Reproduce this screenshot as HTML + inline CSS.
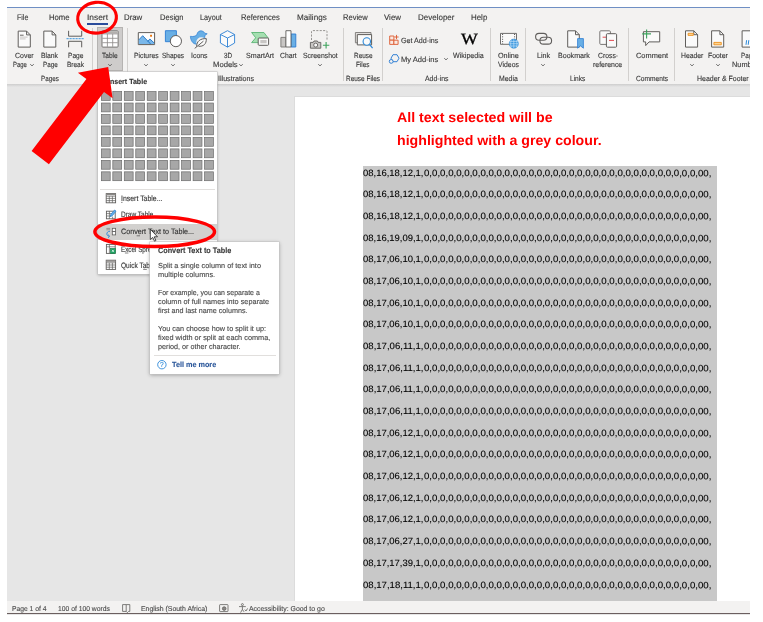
<!DOCTYPE html>
<html lang="en">
<head>
<meta charset="utf-8">
<title>Word - Insert Table - Convert Text to Table</title>
<style>
html,body{margin:0;padding:0;background:#fff;}
body{width:763px;height:622px;position:relative;overflow:hidden;font-family:"Liberation Sans",sans-serif;color:#383838;}
#app{position:absolute;left:7px;top:7px;width:743px;height:607.5px;overflow:hidden;background:#e6e6e6;}
/* everything inside #app is positioned in page coordinates via this shifted layer */
#L{position:absolute;left:-7px;top:-7px;width:763px;height:622px;will-change:transform;}
.t{position:absolute;white-space:nowrap;line-height:1;transform-origin:0 0;display:block;-webkit-text-stroke-width:.12px;}
.a{position:absolute;display:block;overflow:visible;}
#topline{position:absolute;left:7px;top:7px;width:743px;height:1px;background:#6f8fc4;}
#ribbon{position:absolute;left:7px;top:8px;width:743px;height:75.6px;background:#f3f2f1;}
#ribshadow{position:absolute;left:7px;top:83.6px;width:743px;height:3px;background:linear-gradient(#cdcdcd,#e6e6e6);}
.sep{position:absolute;top:28px;width:1px;height:53px;background:#d2d0ce;display:block;}
#tabline{position:absolute;left:86.5px;top:22.5px;width:21.5px;height:2px;background:#2b4c9b;}
#tablebtn{position:absolute;left:97.2px;top:27.3px;width:25.6px;height:44px;background:#cecccb;box-sizing:border-box;border:1px solid #b5b3b1;}
#page{position:absolute;left:294px;top:96px;width:470px;height:506px;background:#fff;border-left:1px solid #dcdcdc;border-top:1px solid #dcdcdc;box-sizing:border-box;}
#sel{position:absolute;left:363.2px;top:165.7px;width:353.4px;height:436px;background:#c8c8c8;}
#status{position:absolute;left:7px;top:601.3px;width:743px;height:12.2px;background:#f3f2f1;border-bottom:1.4px solid #6b5f5f;}
#dd{position:absolute;left:97.8px;top:72px;width:119.3px;height:202px;background:#fff;box-shadow:0 0 0 .6px #c6c6c6,0 1px 3px rgba(0,0,0,.32);}
#ddsep{position:absolute;left:100px;top:189px;width:115px;height:1px;background:#e1dfdd;}
#ddhl{position:absolute;left:97.8px;top:224.1px;width:119.3px;height:16px;background:#d2d0ce;}
#tt{position:absolute;left:150.3px;top:242px;width:129px;height:131.8px;background:#fff;box-shadow:0 0 0 .6px #c6c6c6,0 1px 4px rgba(0,0,0,.35);}
#ttsep{position:absolute;left:153.8px;top:355.2px;width:122.6px;height:1px;background:#e1dfdd;}
</style>
</head>
<body>
<div id="app"><div id="L">
<header id="ribbon-area">
<div id="topline"></div>
<div id="ribbon"></div>
<div id="ribshadow"></div>
<div id="tabline"></div>
<nav id="tabs">
<span class="t" style="left:17.30px;top:13px;line-height:9px;font-size:8.1px;transform:scaleX(0.8658) rotate(.03deg)">File</span><span class="t" style="left:48.60px;top:13px;line-height:9px;font-size:8.1px;transform:scaleX(0.9534) rotate(.03deg)">Home</span><span class="t" style="left:86.70px;top:13px;line-height:9px;font-size:8.1px;transform:scaleX(1.0366) rotate(.03deg)">Insert</span><span class="t" style="left:124.00px;top:13px;line-height:9px;font-size:8.1px;transform:scaleX(0.9682) rotate(.03deg)">Draw</span><span class="t" style="left:159.50px;top:13px;line-height:9px;font-size:8.1px;transform:scaleX(0.9320) rotate(.03deg)">Design</span><span class="t" style="left:200.40px;top:13px;line-height:9px;font-size:8.1px;transform:scaleX(0.9005) rotate(.03deg)">Layout</span><span class="t" style="left:240.60px;top:13px;line-height:9px;font-size:8.1px;transform:scaleX(0.9391) rotate(.03deg)">References</span><span class="t" style="left:296.50px;top:13px;line-height:9px;font-size:8.1px;transform:scaleX(0.9996) rotate(.03deg)">Mailings</span><span class="t" style="left:343.20px;top:13px;line-height:9px;font-size:8.1px;transform:scaleX(0.9338) rotate(.03deg)">Review</span><span class="t" style="left:384.30px;top:13px;line-height:9px;font-size:8.1px;transform:scaleX(0.9764) rotate(.03deg)">View</span><span class="t" style="left:417.50px;top:13px;line-height:9px;font-size:8.1px;transform:scaleX(0.9886) rotate(.03deg)">Developer</span><span class="t" style="left:470.60px;top:13px;line-height:9px;font-size:8.1px;transform:scaleX(0.9785) rotate(.03deg)">Help</span>
</nav>
<div id="tablebtn"></div>
<section id="ribbonbody">
<span class="t" style="left:14.80px;top:51px;line-height:9px;font-size:7.5px;transform:scaleX(0.9297) rotate(.03deg)">Cover</span><span class="t" style="left:13.10px;top:60px;line-height:9px;font-size:7.5px;transform:scaleX(0.7879) rotate(.03deg)">Page</span><span class="t" style="left:41.00px;top:51px;line-height:9px;font-size:7.5px;transform:scaleX(0.9061) rotate(.03deg)">Blank</span><span class="t" style="left:42.60px;top:60px;line-height:9px;font-size:7.5px;transform:scaleX(0.8392) rotate(.03deg)">Page</span><span class="t" style="left:67.50px;top:51px;line-height:9px;font-size:7.5px;transform:scaleX(0.8849) rotate(.03deg)">Page</span><span class="t" style="left:66.50px;top:60px;line-height:9px;font-size:7.5px;transform:scaleX(0.8677) rotate(.03deg)">Break</span><span class="t" style="left:41.00px;top:74px;line-height:9px;font-size:7.5px;transform:scaleX(0.8370) rotate(.03deg)">Pages</span><span class="t" style="left:102.20px;top:51px;line-height:9px;font-size:7.5px;transform:scaleX(0.8756) rotate(.03deg)">Table</span><span class="t" style="left:133.90px;top:51px;line-height:9px;font-size:7.5px;transform:scaleX(0.9080) rotate(.03deg)">Pictures</span><span class="t" style="left:162.10px;top:51px;line-height:9px;font-size:7.5px;transform:scaleX(0.8649) rotate(.03deg)">Shapes</span><span class="t" style="left:190.70px;top:51px;line-height:9px;font-size:7.5px;transform:scaleX(0.9260) rotate(.03deg)">Icons</span><span class="t" style="left:223.90px;top:51px;line-height:9px;font-size:7.5px;transform:scaleX(0.8449) rotate(.03deg)">3D</span><span class="t" style="left:213.00px;top:60px;line-height:9px;font-size:7.5px;transform:scaleX(1.0216) rotate(.03deg)">Models</span><span class="t" style="left:245.90px;top:51px;line-height:9px;font-size:7.5px;transform:scaleX(0.9498) rotate(.03deg)">SmartArt</span><span class="t" style="left:280.20px;top:51px;line-height:9px;font-size:7.5px;transform:scaleX(0.9106) rotate(.03deg)">Chart</span><span class="t" style="left:302.80px;top:51px;line-height:9px;font-size:7.5px;transform:scaleX(0.9146) rotate(.03deg)">Screenshot</span><span class="t" style="left:218.00px;top:74px;line-height:9px;font-size:7.5px;transform:scaleX(0.9491) rotate(.03deg)">Illustrations</span><span class="t" style="left:353.80px;top:51px;line-height:9px;font-size:7.5px;transform:scaleX(0.8579) rotate(.03deg)">Reuse</span><span class="t" style="left:356.40px;top:60px;line-height:9px;font-size:7.5px;transform:scaleX(0.8525) rotate(.03deg)">Files</span><span class="t" style="left:345.90px;top:74px;line-height:9px;font-size:7.5px;transform:scaleX(0.8611) rotate(.03deg)">Reuse Files</span><span class="t" style="left:401.00px;top:36px;line-height:9px;font-size:7.5px;transform:scaleX(0.9518) rotate(.03deg)">Get Add-ins</span><span class="t" style="left:401.00px;top:55px;line-height:9px;font-size:7.5px;transform:scaleX(1.0055) rotate(.03deg)">My Add-ins</span><span class="t" style="left:453.30px;top:51px;line-height:9px;font-size:7.5px;transform:scaleX(0.9473) rotate(.03deg)">Wikipedia</span><span class="t" style="left:425.20px;top:74px;line-height:9px;font-size:7.5px;transform:scaleX(0.9241) rotate(.03deg)">Add-ins</span><span class="t" style="left:498.20px;top:51px;line-height:9px;font-size:7.5px;transform:scaleX(0.9640) rotate(.03deg)">Online</span><span class="t" style="left:498.20px;top:60px;line-height:9px;font-size:7.5px;transform:scaleX(0.9168) rotate(.03deg)">Videos</span><span class="t" style="left:499.20px;top:74px;line-height:9px;font-size:7.5px;transform:scaleX(0.9203) rotate(.03deg)">Media</span><span class="t" style="left:537.00px;top:51px;line-height:9px;font-size:7.5px;transform:scaleX(0.9449) rotate(.03deg)">Link</span><span class="t" style="left:558.00px;top:51px;line-height:9px;font-size:7.5px;transform:scaleX(0.9449) rotate(.03deg)">Bookmark</span><span class="t" style="left:598.10px;top:51px;line-height:9px;font-size:7.5px;transform:scaleX(0.9102) rotate(.03deg)">Cross-</span><span class="t" style="left:593.30px;top:60px;line-height:9px;font-size:7.5px;transform:scaleX(0.9216) rotate(.03deg)">reference</span><span class="t" style="left:569.80px;top:74px;line-height:9px;font-size:7.5px;transform:scaleX(0.8739) rotate(.03deg)">Links</span><span class="t" style="left:635.60px;top:51px;line-height:9px;font-size:7.5px;transform:scaleX(0.9874) rotate(.03deg)">Comment</span><span class="t" style="left:635.60px;top:74px;line-height:9px;font-size:7.5px;transform:scaleX(0.8853) rotate(.03deg)">Comments</span><span class="t" style="left:681.00px;top:51px;line-height:9px;font-size:7.5px;transform:scaleX(0.9106) rotate(.03deg)">Header</span><span class="t" style="left:708.00px;top:51px;line-height:9px;font-size:7.5px;transform:scaleX(0.9181) rotate(.03deg)">Footer</span><span class="t" style="left:740.70px;top:51px;line-height:9px;font-size:7.5px;transform:scaleX(0.8449) rotate(.03deg)">Page</span><span class="t" style="left:731.80px;top:60px;line-height:9px;font-size:7.5px;transform:scaleX(0.9822) rotate(.03deg)">Number</span><span class="t" style="left:696.80px;top:74px;line-height:9px;font-size:7.5px;transform:scaleX(0.9325) rotate(.03deg)">Header &amp; Footer</span><span class="t" style="-webkit-text-stroke:.35px #000;left:460.60px;top:30px;line-height:17px;font-size:15.8px;font-family:'Liberation Serif',serif;color:#000;transform:scaleX(1.1266) rotate(.03deg)">W</span><svg class="a" style="left:29.10px;top:62.80px" width="6" height="4" viewBox="0 0 6 4"><path d="M1.3 1.2 L3 2.9 L4.7 1.2" fill="none" stroke="#555" stroke-width="0.9"/></svg><svg class="a" style="left:106.70px;top:62.60px" width="6" height="4" viewBox="0 0 6 4"><path d="M1.3 1.2 L3 2.9 L4.7 1.2" fill="none" stroke="#555" stroke-width="0.9"/></svg><svg class="a" style="left:143.00px;top:62.60px" width="6" height="4" viewBox="0 0 6 4"><path d="M1.3 1.2 L3 2.9 L4.7 1.2" fill="none" stroke="#555" stroke-width="0.9"/></svg><svg class="a" style="left:169.80px;top:62.60px" width="6" height="4" viewBox="0 0 6 4"><path d="M1.3 1.2 L3 2.9 L4.7 1.2" fill="none" stroke="#555" stroke-width="0.9"/></svg><svg class="a" style="left:238.30px;top:62.80px" width="6" height="4" viewBox="0 0 6 4"><path d="M1.3 1.2 L3 2.9 L4.7 1.2" fill="none" stroke="#555" stroke-width="0.9"/></svg><svg class="a" style="left:316.50px;top:62.60px" width="6" height="4" viewBox="0 0 6 4"><path d="M1.3 1.2 L3 2.9 L4.7 1.2" fill="none" stroke="#555" stroke-width="0.9"/></svg><svg class="a" style="left:443.40px;top:57.20px" width="6" height="4" viewBox="0 0 6 4"><path d="M1.3 1.2 L3 2.9 L4.7 1.2" fill="none" stroke="#555" stroke-width="0.9"/></svg><svg class="a" style="left:540.30px;top:62.60px" width="6" height="4" viewBox="0 0 6 4"><path d="M1.3 1.2 L3 2.9 L4.7 1.2" fill="none" stroke="#555" stroke-width="0.9"/></svg><svg class="a" style="left:688.60px;top:62.60px" width="6" height="4" viewBox="0 0 6 4"><path d="M1.3 1.2 L3 2.9 L4.7 1.2" fill="none" stroke="#555" stroke-width="0.9"/></svg><svg class="a" style="left:714.70px;top:62.60px" width="6" height="4" viewBox="0 0 6 4"><path d="M1.3 1.2 L3 2.9 L4.7 1.2" fill="none" stroke="#555" stroke-width="0.9"/></svg><i class="sep" style="left:92.0px"></i><i class="sep" style="left:127.1px"></i><i class="sep" style="left:342.8px"></i><i class="sep" style="left:381.8px"></i><i class="sep" style="left:490.2px"></i><i class="sep" style="left:525.1px"></i><i class="sep" style="left:628.4px"></i><i class="sep" style="left:673.9px"></i>
<svg class="a" style="left:0;top:0" width="763" height="622" viewBox="0 0 763 622" fill="none" stroke-linejoin="round">
<g stroke="#605e5c" stroke-width="1" fill="#fafafa">
<!-- Cover Page -->
<path d="M18.2 31.1H26.6L30.3 34.9V47.1H18.2Z"/><path d="M26.6 31.1V34.9H30.3" fill="none"/>
<!-- Blank Page -->
<path d="M43.8 31.1H52.1L55.8 34.9V47.1H43.8Z"/><path d="M52.1 31.1V34.9H55.8" fill="none"/>
</g>
<g stroke="none">
<rect x="20" y="34.6" width="3.6" height="1.3" fill="#8a8886"/><rect x="20" y="36.6" width="7.6" height="1" fill="#c8c6c4"/><rect x="20" y="38.4" width="5.6" height="1" fill="#c8c6c4"/>
</g>
<!-- Page Break -->
<g stroke="#605e5c" stroke-width="1" fill="none">
<path d="M68.6 30.8V36.2H81.7V30.8"/><path d="M68.6 47.3V41.3H81.7V47.3"/>
</g>
<path d="M66.5 38.7H83.8" stroke="#3a96dd" stroke-width="1" stroke-dasharray="2.2 0.8"/>
<!-- Table icon -->
<g>
<rect x="102" y="30.8" width="16.1" height="16.3" rx="0.9" fill="#fff" stroke="#6b6967" stroke-width="0.9"/>
<path d="M102.5 33.6V32.2Q102.5 31.3 103.4 31.3H116.7Q117.6 31.3 117.6 32.2V33.6Z" fill="#b3b0ad" stroke="none"/>
<path d="M102.4 33.9H117.7M102.4 38.3H117.7M102.4 42.7H117.7M107.4 33.9V46.8M112.7 33.9V46.8" stroke="#8a8886" stroke-width="0.8"/>
</g>
<!-- Pictures -->
<g>
<rect x="138.3" y="32.6" width="16.3" height="12" fill="#fdfdfd" stroke="#605e5c"/>
<path d="M138.8 39.9L142.7 35.7L148.1 41.3L149.9 39L154.1 42.9V44.1H138.8Z" fill="#7ab8ea" stroke="none"/>
<path d="M138.8 39.9L142.7 35.7L150.6 44M147.6 41.4L149.9 39L154.1 42.9" fill="none" stroke="#1e73c4" stroke-width="0.9"/>
<rect x="150.1" y="34.8" width="1.9" height="1.9" fill="#e8740c" stroke="none"/>
</g>
<!-- Shapes -->
<g>
<rect x="165.4" y="30.7" width="11" height="11" fill="#69afe5" stroke="#2b7cd3" stroke-width="0.9"/>
<circle cx="175.9" cy="41.1" r="5.6" fill="#fff" stroke="#605e5c"/>
</g>
<!-- Icons (bird + leaf) -->
<g>
<path d="M190.4 36.3C193 36.9 195.6 36.3 197 34.6C197.2 32.1 199.3 30.4 201.8 30.9C203.2 31.2 204.2 32 204.7 33.2L207.2 33.8L204.9 35.4C204.9 40.6 201.5 44.4 196.3 44.2C193 44 190.6 40.7 190.4 36.3Z" fill="#69afe5" stroke="#2b7cd3" stroke-width="0.7"/>
<circle cx="201.3" cy="42.3" r="5" fill="#f3f2f1" stroke="none"/>
<path d="M196.6 46.6C196.6 41.2 200.4 38.4 206.3 38.6C206.6 44 203.4 46.8 198.4 46.2" fill="#fafafa" stroke="#605e5c" stroke-width="1"/>
<path d="M194.7 48.4L203.4 41.2" stroke="#605e5c" stroke-width="1"/>
</g>
<!-- 3D Models cube -->
<g stroke="#3585d6" stroke-width="0.95" fill="#fafafa">
<path d="M227.5 30.7L234.6 34.5V43L227.5 47.1L220.4 43V34.5Z"/>
<path d="M220.4 34.5L227.5 38L234.6 34.5M227.5 38V47.1" fill="none"/>
</g>
<!-- SmartArt -->
<g>
<path d="M251.6 32.5H263.9L268 37.8L263.9 42.6H251.6L255.7 37.8Z" fill="#a5dfb1" stroke="#4caf6a" stroke-width="0.8"/>
<rect x="258.2" y="38" width="10.4" height="7.3" rx="0.9" fill="#fafafa" stroke="#605e5c"/>
<rect x="260.3" y="40" width="6.3" height="3.3" fill="#c8c6c4" stroke="none"/>
</g>
<!-- Chart -->
<g stroke-width="0.9">
<rect x="280.9" y="37.4" width="5" height="9.6" fill="#c8c6c4" stroke="#797775"/>
<rect x="291" y="34" width="4.8" height="13" fill="#69afe5" stroke="#2b7cd3"/>
<rect x="285.9" y="30.7" width="5.1" height="16.3" fill="#fff" stroke="#605e5c"/>
</g>
<!-- Screenshot -->
<g>
<path d="M311.5 40V31.6Q311.5 30.6 312.5 30.6H326Q327 30.6 327 31.6V40.6" stroke="#8a8886" stroke-width="0.9" stroke-dasharray="2.1 1.3"/>
<path d="M310.4 42.4H313.2L314 41H317.4L318.2 42.4H320.8V48.2H310.4Z" fill="#c8c6c4" stroke="#605e5c" stroke-width="0.9"/>
<circle cx="315.7" cy="45.1" r="2" fill="#fafafa" stroke="#605e5c" stroke-width="0.9"/>
<path d="M326.1 42V48.4M322.9 45.2H329.3" stroke="#3ca35c" stroke-width="1.1"/>
</g>
<!-- Reuse Files -->
<g>
<rect x="355.4" y="32.5" width="15.6" height="10.3" fill="#e1dfdd" stroke="#797775" stroke-width="0.9"/>
<rect x="357.3" y="34.6" width="14.3" height="10.3" fill="#fafafa" stroke="#605e5c"/>
<circle cx="366.8" cy="41.5" r="3.7" fill="#fafafa" stroke="#2b88d8" stroke-width="1.1"/>
<path d="M369.5 44.4L372.6 48.2" stroke="#2b88d8" stroke-width="1.2"/>
</g>
<!-- Get Add-ins -->
<g stroke="#dc5a30" stroke-width="0.9" fill="#fbe9e2">
<rect x="389.7" y="36" width="4.2" height="4.2"/><rect x="389.7" y="40.2" width="4.2" height="4.2"/><rect x="393.9" y="40.2" width="4.2" height="4.2"/>
<path d="M396.5 34.9V39.1M394.4 37H398.6" fill="none"/>
</g>
<!-- My Add-ins -->
<g stroke="#2b7cd3" stroke-width="0.95" fill="#f3f2f1">
<path d="M399 58.2L397 61.7H393L391 58.2L393 54.7H397Z" stroke-linejoin="round"/>
<circle cx="391.2" cy="61.4" r="1.9"/>
</g>
<!-- Online Videos -->
<g>
<rect x="500.5" y="33.4" width="16" height="10.9" fill="#fafafa" stroke="#605e5c" stroke-width="0.9"/>
<path d="M502.6 34V44M514.6 34V40" stroke="#3b3a39" stroke-width="1" stroke-dasharray="0.9 1.5"/>
<circle cx="513.8" cy="43.7" r="4.6" fill="#3f9ae0" stroke="#2b88d8" stroke-width="0.5"/>
<path d="M509.4 43.7H518.2M513.8 39.3V48.1M511.3 40.2C510.4 42.5 510.4 45 511.3 47.3M516.3 40.2C517.2 42.5 517.2 45 516.3 47.3M510 41.4H517.6M510 46H517.6" stroke="#cfe6f8" stroke-width="0.6" fill="none"/>
</g>
<!-- Link -->
<g stroke="#605e5c" stroke-width="1.1">
<rect x="535.6" y="33.4" width="11.3" height="6.8" rx="3.4"/>
<rect x="539.9" y="37.2" width="11.7" height="6.9" rx="3.45"/>
</g>
<!-- Bookmark -->
<g>
<path d="M567.7 30.8H575.5L579.3 34.7V47.1H567.7Z" fill="#fafafa" stroke="#605e5c"/><path d="M575.5 30.8V34.7H579.3" stroke="#605e5c"/>
<path d="M577.6 38.6H583.4V48.2L580.5 45.9L577.6 48.2Z" fill="#69afe5" stroke="#2b7cd3" stroke-width="0.8"/>
</g>
<!-- Cross-reference -->
<g>
<rect x="599.8" y="30.8" width="10.6" height="13.6" rx="1" fill="#fafafa" stroke="#797775"/>
<path d="M602.6 37.2H606" stroke="#e0383e" stroke-width="0.9"/>
<rect x="606.4" y="33.7" width="10.2" height="13.5" rx="1" fill="#fafafa" stroke="#605e5c"/>
<path d="M609 40.4H614" stroke="#e0383e" stroke-width="0.9"/>
</g>
<!-- Comment -->
<g>
<path d="M643.4 31.7H659.7V41.9H649L645.7 45.6V41.9H643.4Z" fill="#fafafa" stroke="#605e5c"/>
<path d="M646.6 29.4V38.4M642.2 33.9H651" stroke="#3ca35c" stroke-width="1.1"/>
</g>
<!-- Header -->
<g>
<path d="M685.5 30.8H693.8L697.6 34.7V47.1H685.5Z" fill="#fafafa" stroke="#605e5c"/><path d="M693.8 30.8V34.7H697.6" stroke="#605e5c"/>
<rect x="688.1" y="33.3" width="5.2" height="2.1" fill="#ffd590" stroke="#e8860c" stroke-width="0.8"/>
</g>
<!-- Footer -->
<g>
<path d="M711.6 30.8H719.9L723.7 34.7V47.1H711.6Z" fill="#fafafa" stroke="#605e5c"/><path d="M719.9 30.8V34.7H723.7" stroke="#605e5c"/>
<rect x="713.9" y="42.4" width="7.4" height="2.4" fill="#ffd590" stroke="#e8860c" stroke-width="0.8"/>
</g>
<!-- Page Number -->
<g>
<path d="M742.1 30.8H750.4L754.2 34.7V47.1H742.1Z" fill="#fafafa" stroke="#605e5c"/>
<path d="M746.6 40.2L746 44.8M748.8 40.2L748.2 44.8" stroke="#2b88d8" stroke-width="1"/>
</g>
</svg>

</section>
</header>
<main id="document">
<div id="page"></div>
<div id="sel"></div>
<article id="doc">
<span class="t" style="left:363.10px;top:168px;line-height:10px;font-size:9.1px;-webkit-text-stroke:.1px #000;color:#000;transform:scaleX(1.0397) rotate(.03deg)">08,16,18,12,1,</span><span class="t" style="left:423.60px;top:168px;line-height:10px;font-size:9.1px;-webkit-text-stroke:.1px #000;color:#000;transform:scaleX(1.0625) rotate(.03deg)">0,0,0,0,0,0,0,0,0,0,0,0,0,0,0,0,0,0,0,0,0,0,0,0,0,0,0,0,0,0,0,0,0,0,00,</span><span class="t" style="left:363.10px;top:189px;line-height:10px;font-size:9.1px;-webkit-text-stroke:.1px #000;color:#000;transform:scaleX(1.0397) rotate(.03deg)">08,16,18,12,1,</span><span class="t" style="left:423.60px;top:189px;line-height:10px;font-size:9.1px;-webkit-text-stroke:.1px #000;color:#000;transform:scaleX(1.0625) rotate(.03deg)">0,0,0,0,0,0,0,0,0,0,0,0,0,0,0,0,0,0,0,0,0,0,0,0,0,0,0,0,0,0,0,0,0,0,00,</span><span class="t" style="left:363.10px;top:211px;line-height:10px;font-size:9.1px;-webkit-text-stroke:.1px #000;color:#000;transform:scaleX(1.0397) rotate(.03deg)">08,16,18,12,1,</span><span class="t" style="left:423.60px;top:211px;line-height:10px;font-size:9.1px;-webkit-text-stroke:.1px #000;color:#000;transform:scaleX(1.0625) rotate(.03deg)">0,0,0,0,0,0,0,0,0,0,0,0,0,0,0,0,0,0,0,0,0,0,0,0,0,0,0,0,0,0,0,0,0,0,00,</span><span class="t" style="left:363.10px;top:233px;line-height:10px;font-size:9.1px;-webkit-text-stroke:.1px #000;color:#000;transform:scaleX(1.0397) rotate(.03deg)">08,16,19,09,1,</span><span class="t" style="left:423.60px;top:233px;line-height:10px;font-size:9.1px;-webkit-text-stroke:.1px #000;color:#000;transform:scaleX(1.0625) rotate(.03deg)">0,0,0,0,0,0,0,0,0,0,0,0,0,0,0,0,0,0,0,0,0,0,0,0,0,0,0,0,0,0,0,0,0,0,00,</span><span class="t" style="left:363.10px;top:254px;line-height:10px;font-size:9.1px;-webkit-text-stroke:.1px #000;color:#000;transform:scaleX(1.0397) rotate(.03deg)">08,17,06,10,1,</span><span class="t" style="left:423.60px;top:254px;line-height:10px;font-size:9.1px;-webkit-text-stroke:.1px #000;color:#000;transform:scaleX(1.0625) rotate(.03deg)">0,0,0,0,0,0,0,0,0,0,0,0,0,0,0,0,0,0,0,0,0,0,0,0,0,0,0,0,0,0,0,0,0,0,00,</span><span class="t" style="left:363.10px;top:276px;line-height:10px;font-size:9.1px;-webkit-text-stroke:.1px #000;color:#000;transform:scaleX(1.0397) rotate(.03deg)">08,17,06,10,1,</span><span class="t" style="left:423.60px;top:276px;line-height:10px;font-size:9.1px;-webkit-text-stroke:.1px #000;color:#000;transform:scaleX(1.0625) rotate(.03deg)">0,0,0,0,0,0,0,0,0,0,0,0,0,0,0,0,0,0,0,0,0,0,0,0,0,0,0,0,0,0,0,0,0,0,00,</span><span class="t" style="left:363.10px;top:298px;line-height:10px;font-size:9.1px;-webkit-text-stroke:.1px #000;color:#000;transform:scaleX(1.0397) rotate(.03deg)">08,17,06,10,1,</span><span class="t" style="left:423.60px;top:298px;line-height:10px;font-size:9.1px;-webkit-text-stroke:.1px #000;color:#000;transform:scaleX(1.0625) rotate(.03deg)">0,0,0,0,0,0,0,0,0,0,0,0,0,0,0,0,0,0,0,0,0,0,0,0,0,0,0,0,0,0,0,0,0,0,00,</span><span class="t" style="left:363.10px;top:319px;line-height:10px;font-size:9.1px;-webkit-text-stroke:.1px #000;color:#000;transform:scaleX(1.0397) rotate(.03deg)">08,17,06,10,1,</span><span class="t" style="left:423.60px;top:319px;line-height:10px;font-size:9.1px;-webkit-text-stroke:.1px #000;color:#000;transform:scaleX(1.0625) rotate(.03deg)">0,0,0,0,0,0,0,0,0,0,0,0,0,0,0,0,0,0,0,0,0,0,0,0,0,0,0,0,0,0,0,0,0,0,00,</span><span class="t" style="left:363.10px;top:341px;line-height:10px;font-size:9.1px;-webkit-text-stroke:.1px #000;color:#000;transform:scaleX(1.0519) rotate(.03deg)">08,17,06,11,1,</span><span class="t" style="left:423.60px;top:341px;line-height:10px;font-size:9.1px;-webkit-text-stroke:.1px #000;color:#000;transform:scaleX(1.0625) rotate(.03deg)">0,0,0,0,0,0,0,0,0,0,0,0,0,0,0,0,0,0,0,0,0,0,0,0,0,0,0,0,0,0,0,0,0,0,00,</span><span class="t" style="left:363.10px;top:363px;line-height:10px;font-size:9.1px;-webkit-text-stroke:.1px #000;color:#000;transform:scaleX(1.0519) rotate(.03deg)">08,17,06,11,1,</span><span class="t" style="left:423.60px;top:363px;line-height:10px;font-size:9.1px;-webkit-text-stroke:.1px #000;color:#000;transform:scaleX(1.0625) rotate(.03deg)">0,0,0,0,0,0,0,0,0,0,0,0,0,0,0,0,0,0,0,0,0,0,0,0,0,0,0,0,0,0,0,0,0,0,00,</span><span class="t" style="left:363.10px;top:384px;line-height:10px;font-size:9.1px;-webkit-text-stroke:.1px #000;color:#000;transform:scaleX(1.0519) rotate(.03deg)">08,17,06,11,1,</span><span class="t" style="left:423.60px;top:384px;line-height:10px;font-size:9.1px;-webkit-text-stroke:.1px #000;color:#000;transform:scaleX(1.0625) rotate(.03deg)">0,0,0,0,0,0,0,0,0,0,0,0,0,0,0,0,0,0,0,0,0,0,0,0,0,0,0,0,0,0,0,0,0,0,00,</span><span class="t" style="left:363.10px;top:406px;line-height:10px;font-size:9.1px;-webkit-text-stroke:.1px #000;color:#000;transform:scaleX(1.0519) rotate(.03deg)">08,17,06,11,1,</span><span class="t" style="left:423.60px;top:406px;line-height:10px;font-size:9.1px;-webkit-text-stroke:.1px #000;color:#000;transform:scaleX(1.0625) rotate(.03deg)">0,0,0,0,0,0,0,0,0,0,0,0,0,0,0,0,0,0,0,0,0,0,0,0,0,0,0,0,0,0,0,0,0,0,00,</span><span class="t" style="left:363.10px;top:428px;line-height:10px;font-size:9.1px;-webkit-text-stroke:.1px #000;color:#000;transform:scaleX(1.0397) rotate(.03deg)">08,17,06,12,1,</span><span class="t" style="left:423.60px;top:428px;line-height:10px;font-size:9.1px;-webkit-text-stroke:.1px #000;color:#000;transform:scaleX(1.0625) rotate(.03deg)">0,0,0,0,0,0,0,0,0,0,0,0,0,0,0,0,0,0,0,0,0,0,0,0,0,0,0,0,0,0,0,0,0,0,00,</span><span class="t" style="left:363.10px;top:449px;line-height:10px;font-size:9.1px;-webkit-text-stroke:.1px #000;color:#000;transform:scaleX(1.0397) rotate(.03deg)">08,17,06,12,1,</span><span class="t" style="left:423.60px;top:449px;line-height:10px;font-size:9.1px;-webkit-text-stroke:.1px #000;color:#000;transform:scaleX(1.0625) rotate(.03deg)">0,0,0,0,0,0,0,0,0,0,0,0,0,0,0,0,0,0,0,0,0,0,0,0,0,0,0,0,0,0,0,0,0,0,00,</span><span class="t" style="left:363.10px;top:471px;line-height:10px;font-size:9.1px;-webkit-text-stroke:.1px #000;color:#000;transform:scaleX(1.0397) rotate(.03deg)">08,17,06,12,1,</span><span class="t" style="left:423.60px;top:471px;line-height:10px;font-size:9.1px;-webkit-text-stroke:.1px #000;color:#000;transform:scaleX(1.0625) rotate(.03deg)">0,0,0,0,0,0,0,0,0,0,0,0,0,0,0,0,0,0,0,0,0,0,0,0,0,0,0,0,0,0,0,0,0,0,00,</span><span class="t" style="left:363.10px;top:493px;line-height:10px;font-size:9.1px;-webkit-text-stroke:.1px #000;color:#000;transform:scaleX(1.0397) rotate(.03deg)">08,17,06,12,1,</span><span class="t" style="left:423.60px;top:493px;line-height:10px;font-size:9.1px;-webkit-text-stroke:.1px #000;color:#000;transform:scaleX(1.0625) rotate(.03deg)">0,0,0,0,0,0,0,0,0,0,0,0,0,0,0,0,0,0,0,0,0,0,0,0,0,0,0,0,0,0,0,0,0,0,00,</span><span class="t" style="left:363.10px;top:514px;line-height:10px;font-size:9.1px;-webkit-text-stroke:.1px #000;color:#000;transform:scaleX(1.0397) rotate(.03deg)">08,17,06,12,1,</span><span class="t" style="left:423.60px;top:514px;line-height:10px;font-size:9.1px;-webkit-text-stroke:.1px #000;color:#000;transform:scaleX(1.0625) rotate(.03deg)">0,0,0,0,0,0,0,0,0,0,0,0,0,0,0,0,0,0,0,0,0,0,0,0,0,0,0,0,0,0,0,0,0,0,00,</span><span class="t" style="left:363.10px;top:536px;line-height:10px;font-size:9.1px;-webkit-text-stroke:.1px #000;color:#000;transform:scaleX(1.0397) rotate(.03deg)">08,17,06,27,1,</span><span class="t" style="left:423.60px;top:536px;line-height:10px;font-size:9.1px;-webkit-text-stroke:.1px #000;color:#000;transform:scaleX(1.0625) rotate(.03deg)">0,0,0,0,0,0,0,0,0,0,0,0,0,0,0,0,0,0,0,0,0,0,0,0,0,0,0,0,0,0,0,0,0,0,00,</span><span class="t" style="left:363.10px;top:558px;line-height:10px;font-size:9.1px;-webkit-text-stroke:.1px #000;color:#000;transform:scaleX(1.0397) rotate(.03deg)">08,17,17,39,1,</span><span class="t" style="left:423.60px;top:558px;line-height:10px;font-size:9.1px;-webkit-text-stroke:.1px #000;color:#000;transform:scaleX(1.0625) rotate(.03deg)">0,0,0,0,0,0,0,0,0,0,0,0,0,0,0,0,0,0,0,0,0,0,0,0,0,0,0,0,0,0,0,0,0,0,00,</span><span class="t" style="left:363.10px;top:580px;line-height:10px;font-size:9.1px;-webkit-text-stroke:.1px #000;color:#000;transform:scaleX(1.0519) rotate(.03deg)">08,17,18,11,1,</span><span class="t" style="left:423.60px;top:580px;line-height:10px;font-size:9.1px;-webkit-text-stroke:.1px #000;color:#000;transform:scaleX(1.0625) rotate(.03deg)">0,0,0,0,0,0,0,0,0,0,0,0,0,0,0,0,0,0,0,0,0,0,0,0,0,0,0,0,0,0,0,0,0,0,00,</span><span class="t" style="-webkit-text-stroke-width:0;left:397.20px;top:109px;line-height:16px;font-size:13.9px;font-weight:700;color:#ff0000;transform:scaleX(1.0231) rotate(.03deg)">All text selected will be</span><span class="t" style="-webkit-text-stroke-width:0;left:397.20px;top:132px;line-height:16px;font-size:13.9px;font-weight:700;color:#ff0000;transform:scaleX(1.0195) rotate(.03deg)">highlighted with a grey colour.</span>
</article>
</main>
<footer id="statusbar">
<div id="status"></div>
<span class="t" style="left:11.80px;top:605px;line-height:8px;font-size:7.1px;color:#4a4a4a;transform:scaleX(0.9499) rotate(.03deg)">Page 1 of 4</span><span class="t" style="left:58.40px;top:605px;line-height:8px;font-size:7.1px;color:#4a4a4a;transform:scaleX(0.9528) rotate(.03deg)">100 of 100 words</span><span class="t" style="left:140.80px;top:605px;line-height:8px;font-size:7.1px;color:#4a4a4a;transform:scaleX(0.9726) rotate(.03deg)">English (South Africa)</span><span class="t" style="left:248.90px;top:605px;line-height:8px;font-size:7.1px;color:#4a4a4a;transform:scaleX(0.9750) rotate(.03deg)">Accessibility: Good to go</span>
</footer>
<div id="menu" role="menu">
<div id="dd"></div>
<div id="ddsep"></div>
<div id="ddhl"></div>
<svg class="a" style="left:0;top:0" width="763" height="622" viewBox="0 0 763 622"><g fill="#a7a7a7" stroke="#6c6c6c" stroke-width="0.7"><rect x="101.35" y="91.55" width="8.85" height="8.85"/><rect x="112.82" y="91.55" width="8.85" height="8.85"/><rect x="124.29" y="91.55" width="8.85" height="8.85"/><rect x="135.76" y="91.55" width="8.85" height="8.85"/><rect x="147.23" y="91.55" width="8.85" height="8.85"/><rect x="158.70" y="91.55" width="8.85" height="8.85"/><rect x="170.17" y="91.55" width="8.85" height="8.85"/><rect x="181.64" y="91.55" width="8.85" height="8.85"/><rect x="193.11" y="91.55" width="8.85" height="8.85"/><rect x="204.58" y="91.55" width="8.85" height="8.85"/><rect x="101.35" y="103.02" width="8.85" height="8.85"/><rect x="112.82" y="103.02" width="8.85" height="8.85"/><rect x="124.29" y="103.02" width="8.85" height="8.85"/><rect x="135.76" y="103.02" width="8.85" height="8.85"/><rect x="147.23" y="103.02" width="8.85" height="8.85"/><rect x="158.70" y="103.02" width="8.85" height="8.85"/><rect x="170.17" y="103.02" width="8.85" height="8.85"/><rect x="181.64" y="103.02" width="8.85" height="8.85"/><rect x="193.11" y="103.02" width="8.85" height="8.85"/><rect x="204.58" y="103.02" width="8.85" height="8.85"/><rect x="101.35" y="114.49" width="8.85" height="8.85"/><rect x="112.82" y="114.49" width="8.85" height="8.85"/><rect x="124.29" y="114.49" width="8.85" height="8.85"/><rect x="135.76" y="114.49" width="8.85" height="8.85"/><rect x="147.23" y="114.49" width="8.85" height="8.85"/><rect x="158.70" y="114.49" width="8.85" height="8.85"/><rect x="170.17" y="114.49" width="8.85" height="8.85"/><rect x="181.64" y="114.49" width="8.85" height="8.85"/><rect x="193.11" y="114.49" width="8.85" height="8.85"/><rect x="204.58" y="114.49" width="8.85" height="8.85"/><rect x="101.35" y="125.96" width="8.85" height="8.85"/><rect x="112.82" y="125.96" width="8.85" height="8.85"/><rect x="124.29" y="125.96" width="8.85" height="8.85"/><rect x="135.76" y="125.96" width="8.85" height="8.85"/><rect x="147.23" y="125.96" width="8.85" height="8.85"/><rect x="158.70" y="125.96" width="8.85" height="8.85"/><rect x="170.17" y="125.96" width="8.85" height="8.85"/><rect x="181.64" y="125.96" width="8.85" height="8.85"/><rect x="193.11" y="125.96" width="8.85" height="8.85"/><rect x="204.58" y="125.96" width="8.85" height="8.85"/><rect x="101.35" y="137.43" width="8.85" height="8.85"/><rect x="112.82" y="137.43" width="8.85" height="8.85"/><rect x="124.29" y="137.43" width="8.85" height="8.85"/><rect x="135.76" y="137.43" width="8.85" height="8.85"/><rect x="147.23" y="137.43" width="8.85" height="8.85"/><rect x="158.70" y="137.43" width="8.85" height="8.85"/><rect x="170.17" y="137.43" width="8.85" height="8.85"/><rect x="181.64" y="137.43" width="8.85" height="8.85"/><rect x="193.11" y="137.43" width="8.85" height="8.85"/><rect x="204.58" y="137.43" width="8.85" height="8.85"/><rect x="101.35" y="148.90" width="8.85" height="8.85"/><rect x="112.82" y="148.90" width="8.85" height="8.85"/><rect x="124.29" y="148.90" width="8.85" height="8.85"/><rect x="135.76" y="148.90" width="8.85" height="8.85"/><rect x="147.23" y="148.90" width="8.85" height="8.85"/><rect x="158.70" y="148.90" width="8.85" height="8.85"/><rect x="170.17" y="148.90" width="8.85" height="8.85"/><rect x="181.64" y="148.90" width="8.85" height="8.85"/><rect x="193.11" y="148.90" width="8.85" height="8.85"/><rect x="204.58" y="148.90" width="8.85" height="8.85"/><rect x="101.35" y="160.37" width="8.85" height="8.85"/><rect x="112.82" y="160.37" width="8.85" height="8.85"/><rect x="124.29" y="160.37" width="8.85" height="8.85"/><rect x="135.76" y="160.37" width="8.85" height="8.85"/><rect x="147.23" y="160.37" width="8.85" height="8.85"/><rect x="158.70" y="160.37" width="8.85" height="8.85"/><rect x="170.17" y="160.37" width="8.85" height="8.85"/><rect x="181.64" y="160.37" width="8.85" height="8.85"/><rect x="193.11" y="160.37" width="8.85" height="8.85"/><rect x="204.58" y="160.37" width="8.85" height="8.85"/><rect x="101.35" y="171.84" width="8.85" height="8.85"/><rect x="112.82" y="171.84" width="8.85" height="8.85"/><rect x="124.29" y="171.84" width="8.85" height="8.85"/><rect x="135.76" y="171.84" width="8.85" height="8.85"/><rect x="147.23" y="171.84" width="8.85" height="8.85"/><rect x="158.70" y="171.84" width="8.85" height="8.85"/><rect x="170.17" y="171.84" width="8.85" height="8.85"/><rect x="181.64" y="171.84" width="8.85" height="8.85"/><rect x="193.11" y="171.84" width="8.85" height="8.85"/><rect x="204.58" y="171.84" width="8.85" height="8.85"/></g></svg>
<span class="t" style="left:107.80px;top:77px;line-height:9px;font-size:7.6px;font-weight:700;color:#333;transform:scaleX(0.9289) rotate(.03deg)">Insert Table</span><span class="t" style="left:121.10px;top:194px;line-height:9px;font-size:7.8px;color:#333;transform:scaleX(0.8890) rotate(.03deg)">Insert Table...</span><span class="t" style="left:121.10px;top:210px;line-height:9px;font-size:7.8px;color:#333;transform:scaleX(0.8334) rotate(.03deg)">Draw Table</span><span class="t" style="left:121.10px;top:227px;line-height:9px;font-size:7.8px;color:#333;transform:scaleX(0.9196) rotate(.03deg)">Convert Text to Table...</span><span class="t" style="left:121.10px;top:245px;line-height:9px;font-size:7.8px;color:#333;transform:scaleX(0.8080) rotate(.03deg)">Excel Spreadsheet</span><span class="t" style="left:121.10px;top:261px;line-height:9px;font-size:7.8px;color:#333;transform:scaleX(0.8402) rotate(.03deg)">Quick Tables</span><svg class="a" style="left:0;top:0" width="763" height="622" viewBox="0 0 763 622" fill="none">
<!-- Insert Table icon -->
<g stroke="#605e5c" stroke-width="0.9">
<rect x="106.2" y="193.6" width="9.4" height="9.2" fill="#fff"/><rect x="106.2" y="193.6" width="9.4" height="1.6" fill="#8a8886" stroke="none"/>
<path d="M106.2 196.2H115.6M106.2 198.4H115.6M106.2 200.6H115.6M109.3 196.2V202.8M112.4 196.2V202.8" stroke-width="0.7"/>
</g>
<!-- Draw Table icon -->
<g stroke="#605e5c" stroke-width="0.9">
<rect x="106.4" y="211.2" width="8.8" height="7.6" fill="#fff"/>
<path d="M106.4 213.6H112M106.4 216H111M109.4 211.2V218.8M112.6 216.6V218.8" stroke-width="0.7"/>
<path d="M110.2 216.6L110.8 214.4L114.6 210L116 211.2L112.2 215.8Z" fill="#69afe5" stroke="#2b88d8" stroke-width="0.8"/>
</g>
<!-- Convert icon -->
<g stroke="#605e5c" stroke-width="0.8">
<rect x="112.3" y="228.3" width="3.3" height="3.3" fill="#fff"/><rect x="112.3" y="231.6" width="3.3" height="3.3" fill="#fff"/>
<path d="M106.4 228.4H110.2M106.4 229.8H110.2" stroke="#8a8886" stroke-width="0.8"/>
<path d="M110 231.3C106.3 231.1 105.6 235.7 109.2 236.2M107.9 234.5L109.7 236.2L107.9 237.9" stroke="#2b88d8" stroke-width="0.9" fill="none"/>
</g>
<!-- Excel icon -->
<g stroke="#605e5c" stroke-width="0.9">
<rect x="106.4" y="244.4" width="8.8" height="9" fill="#fff"/>
<path d="M106.4 246.8H115.2M109.4 244.4V253.4" stroke-width="0.7"/>
<rect x="110.3" y="248.3" width="5.2" height="5.2" fill="#21a366" stroke="#107c41" stroke-width="0.5"/>
<path d="M111.9 249.9L113.9 251.9M113.9 249.9L111.9 251.9" stroke="#fff" stroke-width="0.7"/>
</g>
<!-- Quick Tables icon -->
<g stroke="#605e5c" stroke-width="0.9">
<rect x="106.2" y="260.2" width="9.4" height="9.2" fill="#fff"/><rect x="106.2" y="260.2" width="9.4" height="1.6" fill="#8a8886" stroke="none"/>
<path d="M106.2 262.8H115.6M106.2 265H115.6M106.2 267.2H115.6M109.3 262.8V269.4M112.4 262.8V269.4" stroke-width="0.7"/>
</g>
<!-- underlines for accelerator keys -->
<g stroke="#333" stroke-width="0.6">
<path d="M121.1 202.4H122.5M136.6 235.8H140M124.9 253H128.4M143.2 269.4H146.8"/>
</g>
<!-- status bar icons -->
<g stroke="#605e5c" stroke-width="0.8">
<path d="M122.6 604.6H126.2V611.4H122.6ZM126.2 604.6H129.8V611.4H128.6L127.4 612.6L126.2 611.4"/>
<rect x="219.6" y="604.6" width="8.4" height="7" rx="0.6"/><circle cx="224.2" cy="608.6" r="1.8" fill="#8a8886"/>
<circle cx="242.4" cy="604.6" r="1"/><path d="M239 606.6H245.8M242.4 606.6V609.4L240.6 612.6M242.4 609.4L244 611.8M244.8 609.6L246 611L247.6 608.4"/>
</g>
</svg>

</div>
<div id="tooltip" role="tooltip">
<div id="tt"></div>
<div id="ttsep"></div>
<span class="t" style="left:157.80px;top:246px;line-height:9px;font-size:7.9px;font-weight:700;color:#3b3b3b;transform:scaleX(0.9209) rotate(.03deg)">Convert Text to Table</span><span class="t" style="left:157.80px;top:261px;line-height:9px;font-size:7.3px;color:#4a4a4a;transform:scaleX(1.0033) rotate(.03deg)">Split a single column of text into</span><span class="t" style="left:157.80px;top:270px;line-height:9px;font-size:7.3px;color:#4a4a4a;transform:scaleX(1.0143) rotate(.03deg)">multiple columns.</span><span class="t" style="left:157.80px;top:288px;line-height:9px;font-size:7.3px;color:#4a4a4a;transform:scaleX(0.9539) rotate(.03deg)">For example, you can separate a</span><span class="t" style="left:157.80px;top:297px;line-height:9px;font-size:7.3px;color:#4a4a4a;transform:scaleX(0.9993) rotate(.03deg)">column of full names into separate</span><span class="t" style="left:157.80px;top:306px;line-height:9px;font-size:7.3px;color:#4a4a4a;transform:scaleX(0.9859) rotate(.03deg)">first and last name columns.</span><span class="t" style="left:157.80px;top:324px;line-height:9px;font-size:7.3px;color:#4a4a4a;transform:scaleX(1.0001) rotate(.03deg)">You can choose how to split it up:</span><span class="t" style="left:157.80px;top:333px;line-height:9px;font-size:7.3px;color:#4a4a4a;transform:scaleX(1.0028) rotate(.03deg)">fixed width or split at each comma,</span><span class="t" style="left:157.80px;top:342px;line-height:9px;font-size:7.3px;color:#4a4a4a;transform:scaleX(0.9882) rotate(.03deg)">period, or other character.</span><span class="t" style="left:171.80px;top:360px;line-height:9px;font-size:7.6px;font-weight:700;color:#2b579a;transform:scaleX(0.9542) rotate(.03deg)">Tell me more</span>
<svg class="a" style="left:157px;top:360px" width="10" height="10" viewBox="157 360 10 10" fill="none"><circle cx="161.9" cy="364.7" r="4.2" stroke="#2b88d8" stroke-width="0.9" fill="#fff"/></svg><span class="t" style="left:160.1px;top:361.5px;font-size:6.6px;color:#2b88d8;">?</span>
</div>
</div></div>
<svg class="a" style="left:0;top:0" width="763" height="622" viewBox="0 0 763 622" fill="none">
<!-- mouse cursor -->
<path d="M150.3 229.2V239.5L152.7 237.4L154.5 241.2L155.9 240.5L154.2 236.8H157.5Z" fill="#fff" stroke="#222" stroke-width="0.8" stroke-linejoin="round"/>
<!-- red arrow -->
<path d="M108.2 67L77.9 72.8L86.4 79.1L31.6 150.9L48.9 164.2L104 92.1L112.6 98.2Z" fill="#ff0000"/>
<!-- ellipse around Insert tab -->
<ellipse cx="97.05" cy="17.7" rx="19.4" ry="15.4" stroke="#ff0000" stroke-width="3.1" transform="rotate(-6 97.05 17.7)"/>
<!-- ellipse around Convert Text to Table -->
<ellipse cx="154.7" cy="231.8" rx="59.8" ry="14.8" stroke="#ff0000" stroke-width="3.5"/>
</svg>

</body>
</html>
